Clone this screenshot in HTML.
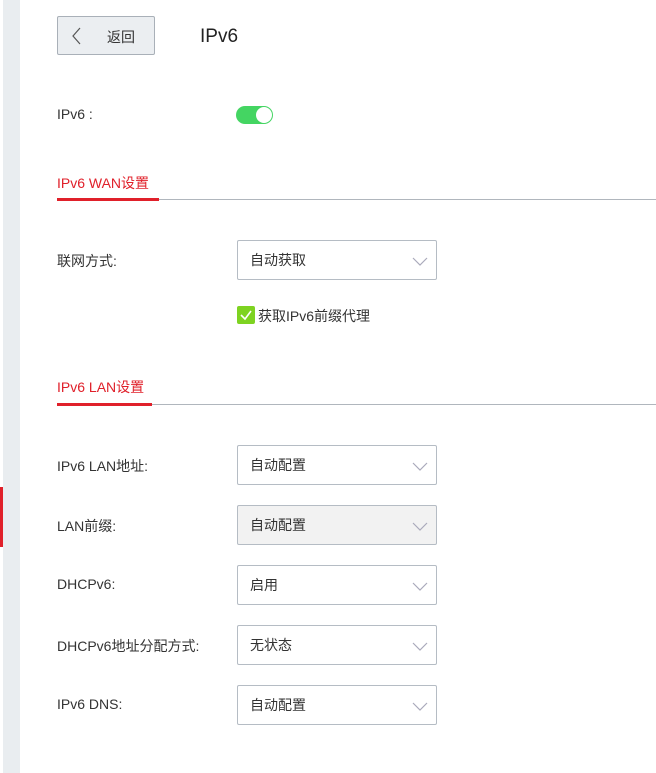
<!DOCTYPE html>
<html><head><meta charset="utf-8"><style>
body{margin:0;width:656px;height:773px;background:#fff;font-family:"Liberation Sans","Noto Sans CJK SC",sans-serif;color:#333;font-size:14px;position:relative;overflow:hidden}
.a{position:absolute}
.sel{position:absolute;left:237px;width:198px;height:38px;border:1px solid #b5bcc4;border-radius:2px;background:#fff}
.sel span{position:absolute;left:12px;top:9px;font-size:14px;color:#333}
.sel svg{position:absolute;right:8px;top:16px}
.lbl{position:absolute;left:57px;font-size:14px}
</style></head><body>
<div class="a" style="left:3px;top:0;width:17px;height:773px;background:#e9edf0"></div>
<div class="a" style="left:0;top:487px;width:3px;height:60px;background:#e0202a"></div>
<div class="a" style="left:57px;top:16px;width:96px;height:37px;border:1px solid #a9b0b8;border-radius:2px;background:#ebeef1"></div>
<svg class="a" style="left:70px;top:27px" width="12" height="18"><path d="M10 1 L3 9 L10 17" fill="none" stroke="#555" stroke-width="1.2"/></svg>
<div class="a" style="left:107px;top:27px;font-size:14px">返回</div>
<div class="a" style="left:200px;top:26px;font-size:19px;color:#222">IPv6</div>
<div class="lbl" style="top:106px">IPv6 :</div>
<div class="a" style="left:236px;top:106px;width:37px;height:18px;border-radius:9px;background:#44d562"></div>
<div class="a" style="left:256px;top:107px;width:16px;height:16px;border-radius:8px;background:#fff"></div>
<div class="a" style="left:57px;top:173px;font-size:14px;color:#e0202a">IPv6 WAN设置</div>
<div class="a" style="left:57px;top:199px;width:599px;height:1px;background:#b0b6bd"></div>
<div class="a" style="left:57px;top:198px;width:102px;height:3px;background:#e0202a"></div>
<div class="lbl" style="top:251px">联网方式:</div>
<div class="sel" style="top:240px"><span>自动获取</span><svg width="16" height="10"><path d="M1 1 L8 8 L15 1" fill="none" stroke="#aab" stroke-width="1.2"/></svg></div>
<div class="a" style="left:237px;top:306px;width:18px;height:18px;border-radius:2px;background:#7ed321"></div>
<svg class="a" style="left:239px;top:308px" width="14" height="14"><path d="M2 7 L6 11 L12 3" fill="none" stroke="#fff" stroke-width="1.6"/></svg>
<div class="a" style="left:258px;top:306px;font-size:14px">获取IPv6前缀代理</div>
<div class="a" style="left:57px;top:377px;font-size:14px;color:#e0202a">IPv6 LAN设置</div>
<div class="a" style="left:57px;top:404px;width:599px;height:1px;background:#b0b6bd"></div>
<div class="a" style="left:57px;top:403px;width:95px;height:3px;background:#e0202a"></div>
<div class="lbl" style="top:456px">IPv6 LAN地址:</div>
<div class="sel" style="top:445px"><span>自动配置</span><svg width="16" height="10"><path d="M1 1 L8 8 L15 1" fill="none" stroke="#aab" stroke-width="1.2"/></svg></div>
<div class="lbl" style="top:516px">LAN前缀:</div>
<div class="sel" style="top:505px;background:#f2f2f2"><span>自动配置</span><svg width="16" height="10"><path d="M1 1 L8 8 L15 1" fill="none" stroke="#aab" stroke-width="1.2"/></svg></div>
<div class="lbl" style="top:576px">DHCPv6:</div>
<div class="sel" style="top:565px"><span>启用</span><svg width="16" height="10"><path d="M1 1 L8 8 L15 1" fill="none" stroke="#aab" stroke-width="1.2"/></svg></div>
<div class="lbl" style="top:636px">DHCPv6地址分配方式:</div>
<div class="sel" style="top:625px"><span>无状态</span><svg width="16" height="10"><path d="M1 1 L8 8 L15 1" fill="none" stroke="#aab" stroke-width="1.2"/></svg></div>
<div class="lbl" style="top:696px">IPv6 DNS:</div>
<div class="sel" style="top:685px"><span>自动配置</span><svg width="16" height="10"><path d="M1 1 L8 8 L15 1" fill="none" stroke="#aab" stroke-width="1.2"/></svg></div>
</body></html>
